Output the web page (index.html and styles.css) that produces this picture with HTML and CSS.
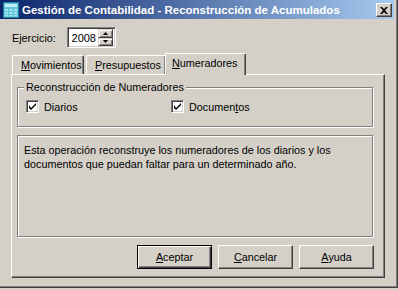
FILE: index.html
```html
<!DOCTYPE html>
<html lang="es">
<head>
<meta charset="utf-8">
<title>Gestión de Contabilidad - Reconstrucción de Acumulados</title>
<link rel="stylesheet" href="styles.css">
</head>
<body>
<div class="window">
  <div class="titlebar">
    <svg class="app-icon" width="16" height="16" viewBox="0 0 16 16">
      <rect x="0.5" y="0.5" width="15" height="15" fill="#5fc7d8" stroke="#2a7f9c"/>
      <rect x="2" y="2" width="12" height="3" fill="#bfeef5"/>
      <g fill="#9fe3ee">
        <rect x="2" y="7" width="3" height="2"/><rect x="6.5" y="7" width="3" height="2"/><rect x="11" y="7" width="3" height="2"/>
        <rect x="2" y="10" width="3" height="2"/><rect x="6.5" y="10" width="3" height="2"/><rect x="11" y="10" width="3" height="2"/>
        <rect x="2" y="13" width="3" height="1.5"/><rect x="6.5" y="13" width="3" height="1.5"/><rect x="11" y="13" width="3" height="1.5"/>
      </g>
    </svg>
    <span class="title">Gestión de Contabilidad - Reconstrucción de Acumulados</span>
    <span class="close-btn">
      <svg width="8" height="7" viewBox="0 0 8 7"><path d="M0 0h2l2 2 2-2h2L5 3.5 8 7H6L4 5 2 7H0l3-3.5z" fill="#000"/></svg>
    </span>
  </div>
  <div class="client">
    <div class="year-row">
      <span class="label">Ejercicio:</span>
      <div class="spin">
        <span class="spin-value">2008</span>
        <div class="spin-btns">
          <span class="spin-btn"><svg width="5" height="3" viewBox="0 0 5 3"><path d="M2.5 0L5 3H0z" fill="#000"/></svg></span>
          <span class="spin-btn"><svg width="5" height="3" viewBox="0 0 5 3"><path d="M0 0h5L2.5 3z" fill="#000"/></svg></span>
        </div>
      </div>
    </div>
    <div class="tabs">
      <div class="tab tab-mov"><u>M</u>ovimientos</div>
      <div class="tab tab-pre"><u>P</u>resupuestos</div>
      <div class="tab tab-num active"><u>N</u>umeradores</div>
    </div>
    <div class="panel">
      <fieldset class="group">
        <legend>Reconstrucción de Numeradores</legend>
        <div class="checks">
          <label class="check check-first"><span class="box"><svg width="7" height="7" viewBox="0 0 7 7"><path d="M0 2v3l2 2 5-5V-0L2 5z" fill="#000"/></svg></span>Diarios</label>
          <label class="check"><span class="box"><svg width="7" height="7" viewBox="0 0 7 7"><path d="M0 2v3l2 2 5-5V-0L2 5z" fill="#000"/></svg></span>Documen<u>t</u>os</label>
        </div>
      </fieldset>
      <div class="info">Esta operación reconstruye los numeradores de los diarios y los documentos que puedan faltar para un determinado año.</div>
      <div class="buttons">
        <span class="btn default"><u>A</u>ceptar</span>
        <span class="btn"><u>C</u>ancelar</span>
        <span class="btn"><u>A</u>yuda</span>
      </div>
    </div>
  </div>
</div>
</body>
</html>
```
FILE: styles.css
```css
html, body {
  margin: 0;
  padding: 0;
  background: #d4d0c8;
}
body {
  font-family: "Liberation Sans", Arial, sans-serif;
  font-size: 10.8px;
  color: #000;
}
u { text-decoration: underline; text-underline-offset: 1px; }

.window {
  width: 398px;
  height: 288px;
  background: #d4d0c8;
  box-shadow: inset -1px -1px #404040, inset -2px -2px #808080;
  overflow: hidden;
}

.titlebar {
  width: 394px;
  height: 19px;
  background: linear-gradient(to right, #0a246a, #a6caf0);
  display: flex;
  align-items: center;
  box-sizing: border-box;
  padding-left: 3px;
}
.app-icon { flex: none; margin-top: 1px; }
.title {
  margin-left: 3px;
  color: #fff;
  font-weight: bold;
  font-size: 11.5px;
  white-space: nowrap;
  flex: 1;
}
.close-btn {
  flex: none;
  width: 16px;
  height: 14px;
  box-sizing: border-box;
  margin-right: 2px;
  margin-top: 1px;
  background: #d4d0c8;
  border: 1px solid;
  border-color: #fff #404040 #404040 #fff;
  box-shadow: inset -1px -1px #808080;
  display: flex;
  align-items: center;
  justify-content: center;
}

.client {
  padding: 8px 0 0 11px;
}

.year-row {
  display: flex;
  align-items: center;
  height: 21px;
}
.year-row .label {
  margin-left: 1px;
  width: 55px;
}
.spin {
  width: 49px;
  height: 21px;
  box-sizing: border-box;
  border: 1px solid;
  border-color: #808080 #fff #fff #808080;
  box-shadow: inset 1px 1px #404040, inset -1px -1px #d4d0c8;
  background: #fff;
  display: flex;
  align-items: center;
  padding: 2px;
}
.spin-value {
  flex: 1;
  text-align: right;
  padding-right: 2px;
  font-size: 11px;
}
.spin-btns {
  display: flex;
  flex-direction: column;
  width: 15px;
  height: 17px;
}
.spin-btn {
  flex: 1;
  box-sizing: border-box;
  background: #d4d0c8;
  border: 1px solid;
  border-color: #d4d0c8 #404040 #404040 #d4d0c8;
  box-shadow: inset 1px 1px #fff, inset -1px -1px #808080;
  display: flex;
  align-items: center;
  justify-content: center;
}

.tabs {
  display: flex;
  align-items: flex-end;
  margin-top: 5px;
  height: 21px;
  position: relative;
  z-index: 1;
}
.tab {
  height: 19px;
  box-sizing: border-box;
  border: 1px solid;
  border-bottom: none;
  border-color: #fff #404040 #404040 #fff;
  box-shadow: inset -1px 0 #808080;
  border-radius: 2px 2px 0 0;
  padding: 3px 0 0 8px;
  background: #d4d0c8;
}
.tab-mov { width: 72px; margin-left: 1px; }
.tab-pre { width: 80px; margin-left: 2px; }
.tab-num {
  width: 81px;
  margin-left: -1px;
  height: 22px;
  margin-bottom: -1px;
  padding-top: 3px;
  padding-left: 6px;
}

.panel {
  width: 374px;
  height: 204px;
  box-sizing: border-box;
  border: 1px solid;
  border-color: #fff #404040 #404040 #fff;
  box-shadow: inset -1px -1px #808080;
  padding: 6px 10px 0 5px;
}

.group {
  margin: 0;
  padding: 6px 8px 13px 8px;
  border: 1px solid #808080;
  box-shadow: inset 1px 1px #fff, 1px 1px #fff;
  width: 356px;
  box-sizing: border-box;
}
.group legend {
  padding: 0 2px;
  margin-left: -2px;
  line-height: 13px;
  background: #d4d0c8;
}
.checks {
  display: flex;
  height: 13px;
  align-items: center;
}
.check {
  display: flex;
  align-items: center;
}
.check-first { width: 145px; }
.box {
  width: 13px;
  height: 13px;
  box-sizing: border-box;
  background: #fff;
  border: 1px solid;
  border-color: #808080 #fff #fff #808080;
  box-shadow: inset 1px 1px #404040, inset -1px -1px #d4d0c8;
  margin-right: 5px;
  display: flex;
  align-items: center;
  justify-content: center;
}

.info {
  margin-top: 8px;
  width: 356px;
  height: 102px;
  box-sizing: border-box;
  border: 1px solid #808080;
  box-shadow: inset 1px 1px #fff, 1px 1px #fff;
  padding: 7px 6px;
  line-height: 14px;
}

.buttons {
  display: flex;
  justify-content: flex-end;
  gap: 6px;
  margin-top: 8px;
  width: 357px;
}
.btn {
  width: 75px;
  height: 24px;
  box-sizing: border-box;
  border: 1px solid;
  border-color: #fff #404040 #404040 #fff;
  box-shadow: inset -1px -1px #808080;
  display: flex;
  align-items: center;
  justify-content: center;
}
.btn.default {
  border-color: #000;
  box-shadow: inset 1px 1px #fff, inset -1px -1px #404040, inset -2px -2px #808080;
}
```
